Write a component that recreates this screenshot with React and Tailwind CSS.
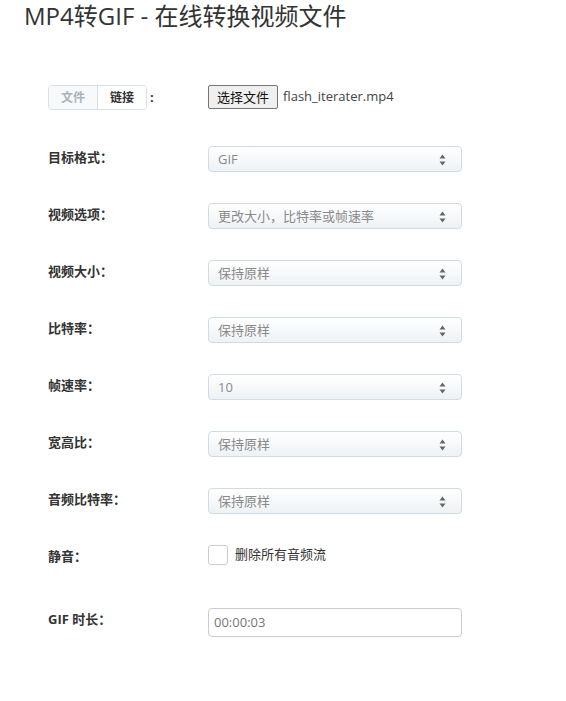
import React from "react";

const font = { fontFamily: '"Open Sans", "Noto Sans CJK SC", sans-serif' };

function Arrows() {
  return (
    <svg width="7" height="12" viewBox="0 0 7 12" className="absolute right-[15px] top-[7px]">
      <polygon points="3.5,0.5 6.5,4.5 0.5,4.5" fill="#666" />
      <polygon points="3.5,11.5 6.5,7.5 0.5,7.5" fill="#666" />
    </svg>
  );
}

function Select({ value }) {
  return (
    <div className="relative w-[254px] h-[26px] rounded-[4px] border border-[#cfdbe5] bg-gradient-to-b from-[#ffffff] to-[#eef2f5] text-[13px] text-[#8a8a8a] pl-[9px] leading-[24px]">
      {value}
      <Arrows />
    </div>
  );
}

function Row({ label, children, mt = "mt-[31px]" }) {
  return (
    <div className={`flex items-start ${mt}`}>
      <div className="w-[160px] text-[13px] font-bold text-[#333] pt-[1px] leading-[20px]">{label}</div>
      {children}
    </div>
  );
}

export default function App() {
  return (
    <div className="w-[566px] h-[701px] bg-white text-[#333]" style={font}>
      <h1 className="pl-[24px] pt-[1px] text-[24px] leading-[30px] font-normal text-[#333]">MP4转GIF - 在线转换视频文件</h1>
      <div className="pl-[48px] pt-[54px]">
        <div className="flex items-start">
          <div className="w-[160px] flex items-center">
            <div className="flex h-[25px] rounded-[4px] border border-[#d6e0e8] overflow-hidden text-[12px] font-bold">
              <div className="w-[49px] flex items-center justify-center bg-[#f7f9fa] text-[#a9b4bf] border-r border-[#d6e0e8]">文件</div>
              <div className="w-[48px] flex items-center justify-center bg-white text-[#333]">链接</div>
            </div>
            <span className="ml-[3px] text-[13px] font-bold">:</span>
          </div>
          <div className="flex items-center">
            <button className="h-[24px] w-[70px] border border-[#767676] rounded-[2px] bg-[#efefef] text-[13px] text-[#111] leading-[20px]">选择文件</button>
            <span className="ml-[5px] text-[13px] text-[#444]">flash_iterater.mp4</span>
          </div>
        </div>
        <Row label="目标格式：" mt="mt-[36px]"><Select value="GIF" /></Row>
        <Row label="视频选项："><Select value="更改大小，比特率或帧速率" /></Row>
        <Row label="视频大小："><Select value="保持原样" /></Row>
        <Row label="比特率："><Select value="保持原样" /></Row>
        <Row label="帧速率："><Select value="10" /></Row>
        <Row label="宽高比："><Select value="保持原样" /></Row>
        <Row label="音频比特率："><Select value="保持原样" /></Row>
        <Row label="静音：">
          <div className="flex items-center">
            <div className="w-[20px] h-[20px] rounded-[3px] border border-[#ccc] bg-white" />
            <span className="ml-[7px] text-[13px] text-[#333]">删除所有音频流</span>
          </div>
        </Row>
        <Row label="GIF 时长：" mt="mt-[42px]">
          <div className="w-[254px] h-[29px] rounded-[4px] border border-[#ccc] bg-white text-[13px] text-[#777] pl-[5px] leading-[27px]">00:00:03</div>
        </Row>
      </div>
    </div>
  );
}
